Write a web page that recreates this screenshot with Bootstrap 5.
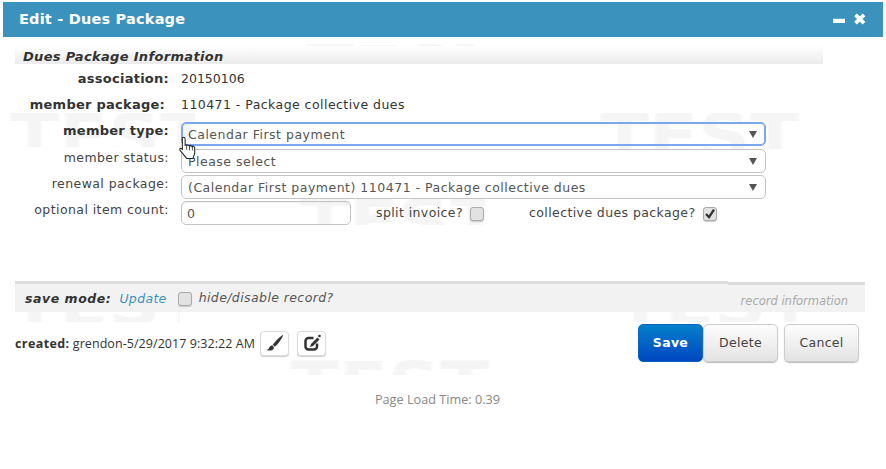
<!DOCTYPE html>
<html lang="en">
<head>
<meta charset="utf-8">
<title>Edit - Dues Package</title>
<link href="https://cdn.jsdelivr.net/npm/bootstrap@5.3.0/dist/css/bootstrap.min.css" rel="stylesheet">
<style>
html,body{height:100%;background:#fff;}
body{font-family:"DejaVu Sans",Verdana,sans-serif;font-size:12.5px;color:#444;overflow:hidden;position:relative;padding:2px 3px 0;letter-spacing:.4px;}
.wm-layer{position:absolute;inset:0;z-index:0;pointer-events:none;overflow:hidden;}
.wm-piece{position:absolute;overflow:hidden;}
.wm-piece::before{content:"TEST";position:absolute;left:0;font:bold 60px/1 "DejaVu Sans",sans-serif;color:#f5f5f5;letter-spacing:0;transform:scaleX(1.2);transform-origin:left top;filter:blur(.7px);white-space:nowrap;}
.wm-a{left:10px;top:113px;width:185px;height:34px;}
.wm-a::before{top:-7px;}
.wm-b{left:600px;top:113px;width:212px;height:36px;}
.wm-b::before{top:-7px;}
.wm-c{left:290px;top:360px;width:200px;height:15px;}
.wm-c::before{top:-6px;}
.wm-d{left:305px;top:44px;width:170px;height:3px;}
.wm-d::before{top:-6px;}
.wm-e{left:300px;top:199px;width:185px;height:26px;}
.wm-e::before{top:-8px;}
.wm-f{left:10px;top:312px;width:170px;height:10px;}
.wm-f::before{top:-38px;}
.wm-g{left:616px;top:312px;width:180px;height:10px;}
.wm-g::before{top:-38px;}
.dlg{position:relative;z-index:1;}
.dlg-head{height:35px;background:#3b92bc;color:#fff;font-size:14.5px;font-weight:700;padding-left:16px;padding-right:16px;letter-spacing:.2px;}
.sect-title{margin:9px 60px 0 12px;height:18px;padding-left:8px;font-size:13px;font-weight:700;font-style:italic;color:#333;line-height:21px;letter-spacing:.33px;background:linear-gradient(#fff,#ebebeb);}
.frm{margin-left:12px;width:751px;}
.frm-row{display:grid;grid-template-columns:154px 585px;column-gap:12px;}
.lbl{text-align:right;line-height:18px;letter-spacing:.42px;}
.lbl-b{font-weight:700;font-size:13px;color:#333;letter-spacing:.25px;}
.val{color:#333;letter-spacing:.45px;}
.val-n{letter-spacing:0;}
.sel.form-select{height:24px;min-height:0;padding:1px 24px 0 6px;font-size:12.5px;line-height:22px;letter-spacing:.5px;color:#555;border:1px solid #c4c4c4;border-radius:5px;font-family:inherit;background-color:transparent;background-image:url("data:image/svg+xml,%3Csvg xmlns='http://www.w3.org/2000/svg' width='8' height='8'%3E%3Cpath d='M0 1h8L4 8z' fill='%23555'/%3E%3C/svg%3E");background-size:8px 8px;background-position:right 8px center;box-shadow:none;}
.sel-on.form-select{border:1px solid #7aa7ee;box-shadow:0 0 0 1px #7aa7ee inset;}
.num.form-control{width:170px;height:24px;min-height:0;padding:0 5px;font-size:12.5px;color:#555;border:1px solid #c4c4c4;border-radius:5px;background:transparent;box-shadow:inset 0 1px 1px #eee;flex:none;}
.tick{appearance:none;width:14px;height:14px;border:1px solid #aaa;border-radius:3px;background:#e2e2e2;margin:2px 0 0;display:inline-block;flex:none;box-shadow:0 1px 1px #ccc;}
.tick:checked{background:#e2e2e2 url("data:image/svg+xml,%3Csvg xmlns='http://www.w3.org/2000/svg' viewBox='0 0 14 14'%3E%3Cpath d='M3 7l3 3.200 5-7.500' fill='none' stroke='%23333' stroke-width='2.400'/%3E%3C/svg%3E") center/14px no-repeat;}
.bar{margin:0 18px 0 12px;height:31px;}
.bar-l{background:#f2f2f2;border-top:3px solid #dcdcdc;height:31px;padding-left:10px;}
.bar-r{background:#f2f2f2;border-top:3px solid #dcdcdc;height:30px;margin-top:1px;width:137px;text-align:right;padding:8px 17px 0 0;font-size:11.5px;font-style:italic;color:#aaa;white-space:nowrap;letter-spacing:0;}
.mode{font-weight:700;font-style:italic;color:#333;letter-spacing:.55px;padding-top:2px;}
.mode-v{font-style:italic;color:#3b92bc;letter-spacing:.33px;padding-top:2px;}
.hide-t{font-style:italic;color:#555;}
.creat{font-family:"Open Sans",sans-serif;font-size:12.5px;color:#333;margin-left:12px;letter-spacing:.06px;padding-top:2px;}
.creat b{letter-spacing:.4px;}
.ibtn{width:29px;height:25px;border:1px solid #ddd;border-radius:4px;background:#fff;box-shadow:0 1px 1px #ccc;padding:0;line-height:1;}
.act{height:38px;font-size:12.5px;border-radius:5px;padding:0;letter-spacing:.3px;}
.act-save{width:65px;background:linear-gradient(#0480cc,#0046c0);color:#fff;font-weight:600;border:1px solid #0a62c0;}
.act-gr{width:75px;background:linear-gradient(#fdfdfd,#e3e3e3);border:1px solid #ccc;color:#444;box-shadow:0 1px 1px #bbb;}
.plt{font-family:"Open Sans",sans-serif;font-size:12.7px;color:#888;text-align:center;margin-right:11px;letter-spacing:0;}
.hand{position:absolute;left:179px;top:136px;z-index:3;}
</style>
</head>
<body>
<div class="wm-layer" aria-hidden="true">
<div class="wm-piece wm-a"></div><div class="wm-piece wm-b"></div><div class="wm-piece wm-c"></div><div class="wm-piece wm-d"></div><div class="wm-piece wm-e"></div><div class="wm-piece wm-f"></div><div class="wm-piece wm-g"></div>
</div>
<div class="dlg">
  <div class="dlg-head d-flex align-items-center justify-content-between">
    <span>Edit - Dues Package</span>
    <svg width="36" height="14" viewBox="0 0 36 14"><rect x="2" y="5.800" width="12" height="4.200" fill="#fff"/><path d="M24.500 1.800l8.500 8.400M33 1.800l-8.500 8.400" stroke="#fff" stroke-width="3.800"/></svg>
  </div>
  <div class="sect-title">Dues Package Information</div>
  <div class="frm">
    <div class="frm-row align-items-center" style="height:26px;margin-top:2px"><div class="lbl lbl-b">association:</div><div class="val val-n">20150106</div></div>
    <div class="frm-row align-items-center" style="height:26px"><div class="lbl lbl-b pe-1">member package:</div><div class="val">110471 - Package collective dues</div></div>
    <div class="frm-row" style="margin-top:4px"><div class="lbl lbl-b">member type:</div><select class="form-select sel sel-on"><option>Calendar First payment</option></select></div>
    <div class="frm-row" style="margin-top:2.500px"><div class="lbl">member status:</div><select class="form-select sel"><option>Please select</option></select></div>
    <div class="frm-row" style="margin-top:2.500px"><div class="lbl">renewal package:</div><select class="form-select sel"><option>(Calendar First payment) 110471 - Package collective dues</option></select></div>
    <div class="frm-row" style="margin-top:2px"><div class="lbl">optional item count:</div>
      <div class="d-flex align-items-center">
        <input class="form-control num" value="0">
        <span style="margin-left:25px">split invoice?</span><input type="checkbox" class="tick" style="margin-left:7px" aria-label="split invoice">
        <span style="margin-left:45px">collective dues package?</span><input type="checkbox" class="tick" style="margin-left:7px" checked aria-label="collective dues package">
      </div>
    </div>
  </div>
  <div class="bar d-flex" style="margin-top:56px">
    <div class="bar-l flex-grow-1 d-flex align-items-center">
      <span class="mode">save mode:</span><span class="mode-v" style="margin-left:8px">Update</span>
      <input type="checkbox" class="tick" style="margin-left:11px" aria-label="hide/disable record"><span class="hide-t" style="margin-left:7px">hide/disable record?</span>
    </div>
    <div class="bar-r">record information</div>
  </div>
  <div class="d-flex align-items-center" style="margin-top:12px;padding-right:24px">
    <div class="creat d-flex align-items-center"><b>created:</b>&nbsp;grendon-5/29/2017 9:32:22 AM</div>
    <button class="btn ibtn" style="margin-left:5px" aria-label="brush"><svg width="20" height="20" viewBox="0 0 20 20"><path d="M18.500 1.500C14 4.500 10.500 8 7.800 11.800l2 2C13 11 16.500 6.500 18.500 1.500z" fill="#333"/><path d="M7.300 12.300c-2.300.3-2.800 1.800-3.300 3-.3.900-1.200 1.500-2.500 1.700 2.200 1 5.800.8 7-1 .6-1.200.4-2.300-1.200-3.700z" fill="#333"/></svg></button>
    <button class="btn ibtn" style="margin-left:8px" aria-label="edit"><svg width="20" height="20" viewBox="0 0 20 20"><path d="M15 10.500v3a3 3 0 0 1-3 3H6.500a3 3 0 0 1-3-3V8a3 3 0 0 1 3-3h5" fill="none" stroke="#333" stroke-width="2.500"/><path d="M15.500 4.500L9 11l-1 3 3-1 6.500-6.500z" fill="#333"/><circle cx="17.500" cy="3" r="1.300" fill="#333"/></svg></button>
    <div class="ms-auto d-flex">
      <button class="btn act act-save">Save</button>
      <button class="btn act act-gr">Delete</button>
      <button class="btn act act-gr" style="margin-left:6px">Cancel</button>
    </div>
  </div>
  <div class="plt" style="margin-top:28px">Page Load Time: 0.39</div>
</div>
<svg class="hand" width="17" height="23" viewBox="0 0 14.500 20"><path d="M3.500 1c1 0 1.700.6 1.700 1.600V8l1.300-.4 1.200.4.800.5 1.400-.3 1 .8 1.400-.2 1.200 1.100V15l-1.500 4.500H6.500L.8 12.500c-.8-1.200.4-2.300 1.500-1.400l.5.500V2.600c0-1 .2-1.600.7-1.600z" fill="#fff" stroke="#222" stroke-width=".9"/><path d="M6.500 8v4M9 8.500v4M11.500 9.500v3" stroke="#222" stroke-width=".7"/></svg>
<script src="https://cdn.jsdelivr.net/npm/bootstrap@5.3.0/dist/js/bootstrap.bundle.min.js"></script>
</body>
</html>
